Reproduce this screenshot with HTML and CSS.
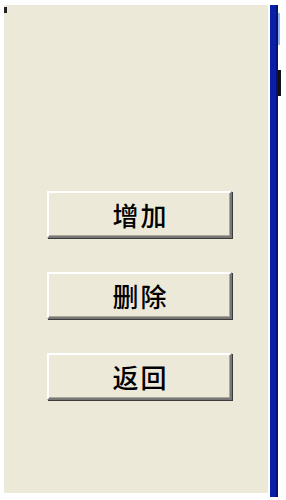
FILE: index.html
```html
<!DOCTYPE html>
<html lang="zh">
<head>
    <meta charset="UTF-8">
    <title>操作</title>
    <link rel="stylesheet" href="styles.css">
</head>
<body>
    <div class="window">
        <div class="panel">
            <span class="grip"></span>
            <div class="actions">
                <button class="btn">增加</button>
                <button class="btn">删除</button>
                <button class="btn">返回</button>
            </div>
        </div>
        <div class="edge">
            <span class="edge-glint"></span>
            <span class="edge-notch"></span>
        </div>
    </div>
</body>
</html>
```

FILE: styles.css
```css
* { margin: 0; padding: 0; box-sizing: border-box; }
html, body { width: 286px; height: 500px; background: #fff; overflow: hidden; }
body { font-family: "Noto Sans CJK SC", "DejaVu Sans", sans-serif; }
.window { display: flex; gap: 2px; height: 500px; padding: 5px 0 5px 4px; }
.panel { position: relative; width: 264px; height: 488px; background: #ece9d8; }
.grip { position: absolute; left: 0; top: 2px; width: 3px; height: 6px; background: #222; }
.actions { display: flex; flex-direction: column; gap: 34px; padding: 186px 0 0 43px; }
.btn {
    width: 185px; height: 47px;
    background: #ece9d8;
    border: 2px solid;
    border-color: #fff #777 #777 #fff;
    box-shadow: 1px 1px 0 #3a3a3a, inset -1px -1px 0 #aca899;
    font-family: inherit;
    font-size: 26px;
    line-height: 1;
    font-weight: 500;
    color: #000;
    letter-spacing: 2px;
    padding-left: 2px;
}
.edge { position: relative; width: 8px; height: 492px; background: #0a1fa8; box-shadow: inset -2px 0 0 #061273; }
.edge-glint { position: absolute; right: -2px; top: 8px; width: 2px; height: 32px; background: #8fb6f0; }
.edge-notch { position: absolute; right: -3px; top: 65px; width: 3px; height: 26px; background: #111; }
```
